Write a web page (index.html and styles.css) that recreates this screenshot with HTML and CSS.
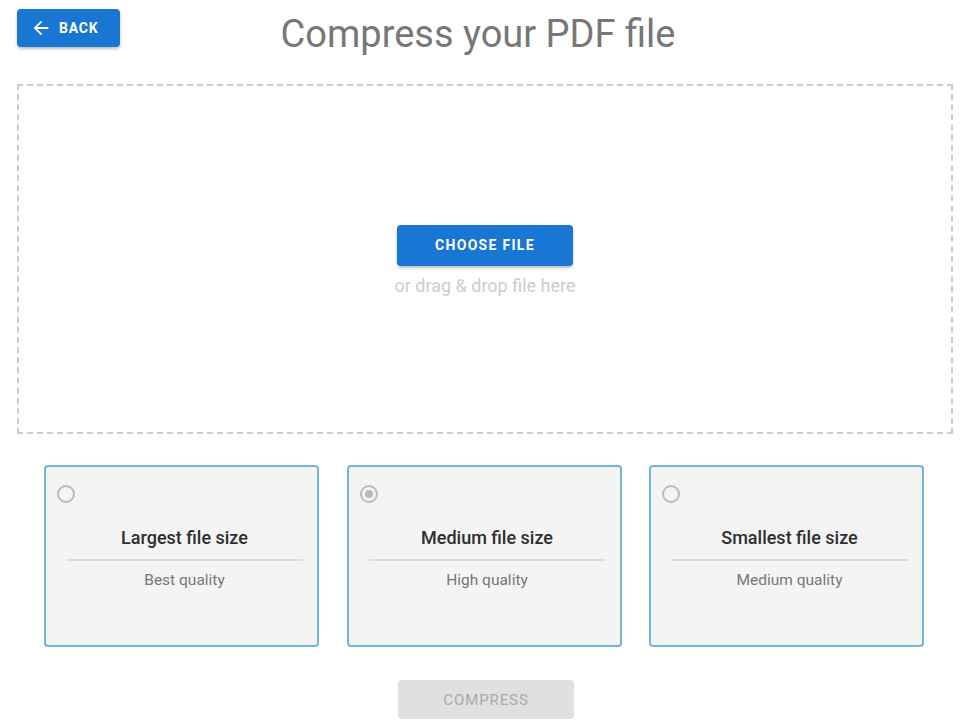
FILE: index.html
```html
<!DOCTYPE html>
<html lang="en">

<head>
  <meta charset="UTF-8" />
  <title>Compress PDF</title>
  <meta name="viewport" content="width=device-width, initial-scale=1.0" />
  <link rel="stylesheet" href="styles.css">
</head>

<body>
  <div class="page">
    <header class="top">
      <button class="btn btn-back">
        <svg width="22" height="22" viewBox="0 0 24 24"><path fill="currentColor" d="M20 11H7.83l5.59-5.59L12 4l-8 8 8 8 1.41-1.41L7.83 13H20v-2z"/></svg>
        Back
      </button>
      <h1>Compress your PDF file</h1>
    </header>

    <div class="dropzone">
      <button class="btn btn-choose">Choose file</button>
      <p class="hint">or drag &amp; drop file here</p>
    </div>

    <div class="options">
      <label class="option">
        <span class="radio"></span>
        <span class="opt-title">Largest file size</span>
        <span class="opt-sub">Best quality</span>
      </label>
      <label class="option">
        <span class="radio checked"></span>
        <span class="opt-title">Medium file size</span>
        <span class="opt-sub">High quality</span>
      </label>
      <label class="option">
        <span class="radio"></span>
        <span class="opt-title">Smallest file size</span>
        <span class="opt-sub">Medium quality</span>
      </label>
    </div>

    <div class="actions">
      <button class="btn btn-compress" disabled>Compress</button>
    </div>
  </div>
</body>

</html>
```

FILE: styles.css
```css
* {
  box-sizing: border-box;
}

body {
  margin: 0;
  background: #fff;
  font-family: Roboto, 'Liberation Sans', sans-serif;
  color: #333;
}

.page {
  padding: 9px 8px 0 17px;
}

.top {
  position: relative;
  height: 75px;
}

h1 {
  margin: 0;
  padding: 3px 14px 0 0;
  font-size: 38px;
  font-weight: 400;
  text-align: center;
  color: #777;
  line-height: 44px;
}

.btn {
  border: none;
  border-radius: 4px;
  font-family: inherit;
  font-weight: 700;
  text-transform: uppercase;
  letter-spacing: 0.8px;
  cursor: pointer;
}

.btn-back {
  position: absolute;
  left: 0;
  top: 0;
  display: flex;
  align-items: center;
  gap: 7px;
  height: 38px;
  width: 103px;
  padding: 0 0 0 13px;
  background: #1976d2;
  color: #fff;
  font-size: 14px;
  box-shadow: 0 2px 3px rgba(0, 0, 0, 0.25);
}

.dropzone {
  height: 350px;
  border: 2px dashed #ccc;
  display: flex;
  flex-direction: column;
  align-items: center;
  justify-content: center;
}

.btn-choose {
  width: 176px;
  height: 41px;
  margin-top: 2px;
  background: #1976d2;
  color: #fff;
  font-size: 14px;
  letter-spacing: 1.3px;
  box-shadow: 0 2px 3px rgba(0, 0, 0, 0.25);
}

.hint {
  margin: 9px 0 0;
  font-size: 18px;
  color: #ccc;
}

.options {
  display: flex;
  gap: 27.5px;
  margin: 31px 0 0 27px;
}

.option {
  position: relative;
  width: 275px;
  height: 182px;
  border: 2px solid #74b3d7;
  border-radius: 4px;
  background: #f4f4f4;
  padding: 60px 14px 0 20px;
  display: flex;
  flex-direction: column;
  align-items: center;
}

.radio {
  position: absolute;
  left: 11px;
  top: 18px;
  width: 18px;
  height: 18px;
  border: 2px solid #bbb;
  border-radius: 50%;
}

.radio.checked::after {
  content: '';
  position: absolute;
  left: 3px;
  top: 3px;
  width: 8px;
  height: 8px;
  border-radius: 50%;
  background: #bbb;
}

.opt-title {
  font-size: 18px;
  font-weight: 500;
  color: #2e2e2e;
  width: 100%;
  text-align: center;
  padding-bottom: 11px;
  border-bottom: 2px solid #ddd;
}

.opt-sub {
  margin-top: 10px;
  font-size: 15.5px;
  color: #777;
}

.actions {
  display: flex;
  justify-content: center;
  margin-top: 33px;
}

.btn-compress {
  width: 176px;
  height: 39px;
  margin-left: 2px;
  background: #e0e0e0;
  color: #aaa;
  font-size: 15px;
  font-weight: 400;
  letter-spacing: 0.9px;
  cursor: default;
}
```
